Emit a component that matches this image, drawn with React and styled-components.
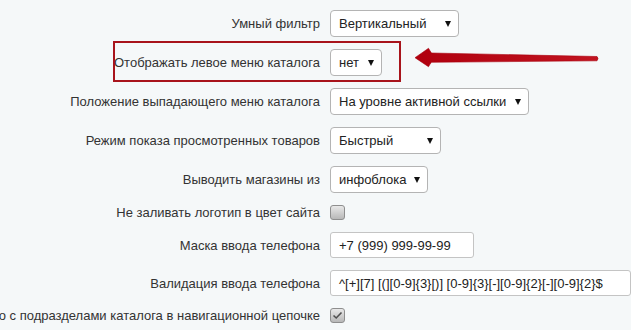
import styled, { createGlobalStyle } from 'styled-components';

const GlobalStyle = createGlobalStyle`
	html, body {
		margin: 0;
		padding: 0;
		background: #f5f8f9;
		overflow: hidden;
	}
	body {
		font-family: 'Liberation Sans', Arial, sans-serif;
		font-size: 13px;
		color: #333;
	}
`;

const rows = [
	{ label: 'Умный фильтр', type: 'select', value: 'Вертикальный', width: 129 },
	{ label: 'Отображать левое меню каталога', type: 'select', value: 'нет', width: 52, highlighted: true },
	{ label: 'Положение выпадающего меню каталога', type: 'select', value: 'На уровне активной ссылки', width: 199 },
	{ label: 'Режим показа просмотренных товаров', type: 'select', value: 'Быстрый', width: 111 },
	{ label: 'Выводить магазины из', type: 'select', value: 'инфоблока', width: 98 },
	{ label: 'Не заливать логотип в цвет сайта', type: 'checkbox', checked: false },
	{ label: 'Маска ввода телефона', type: 'input', value: '+7 (999) 999-99-99', width: 144 },
	{
		label: 'Валидация ввода телефона',
		type: 'input',
		value: '^[+][7] [(][0-9]{3}[)] [0-9]{3}[-][0-9]{2}[-][0-9]{2}$',
		width: 301,
	},
	{
		label: 'Показывать меню только с подразделами каталога в навигационной цепочке',
		type: 'checkbox',
		checked: true,
	},
];

const SForm = styled.div`
	display: flex;
	flex-direction: column;
	gap: 12px;
	padding-top: 10px;
`;

const SRow = styled.div`
	position: relative;
	display: flex;
	align-items: center;
	gap: 10px;
`;

const SLabel = styled.div`
	display: flex;
	justify-content: flex-end;
	flex-shrink: 0;
	width: 320px;
	line-height: 15px;
	white-space: nowrap;
	color: #333;
`;

const SSelect = styled.div`
	box-sizing: border-box;
	display: flex;
	align-items: center;
	justify-content: space-between;
	flex-shrink: 0;
	width: ${({ width }) => width}px;
	height: 27px;
	padding: 0 7px 0 8px;
	border: 1px solid #b4b4b4;
	border-radius: 4px;
	background: #fff;
	color: #222;
	white-space: nowrap;
`;

const SCaret = styled.span`
	width: 0;
	height: 0;
	margin-left: 8px;
	border-left: 3px solid transparent;
	border-right: 3px solid transparent;
	border-top: 6px solid #111;
`;

const SInput = styled.div`
	box-sizing: border-box;
	display: flex;
	align-items: center;
	flex-shrink: 0;
	width: ${({ width }) => width}px;
	height: 26px;
	padding: 0 8px;
	border: 1px solid #c4c4c4;
	border-radius: 3px;
	background: #fff;
	color: #222;
	white-space: nowrap;
	overflow: hidden;
`;

const SCheckbox = styled.span`
	box-sizing: border-box;
	display: flex;
	align-items: center;
	justify-content: center;
	flex-shrink: 0;
	width: 15px;
	height: 15px;
	border: 1px solid #8e8e8e;
	border-radius: 3px;
	background: linear-gradient(#e8e8e8, #b8b8b8);
`;

const SHighlight = styled.div`
	position: absolute;
	left: 113px;
	top: -8px;
	box-sizing: border-box;
	width: 288px;
	height: 41px;
	border: 2px solid #a8141c;
	pointer-events: none;
`;

const SArrow = styled.svg`
	position: absolute;
	left: 413px;
	top: -3px;
	overflow: visible;
`;

const Arrow = () => (
	<SArrow width="190" height="22" viewBox="0 0 190 22">
		<defs>
			<linearGradient id="arrowFill" x1="0" y1="0" x2="1" y2="0">
				<stop offset="0" stopColor="#b0000e" />
				<stop offset="1" stopColor="#c21420" />
			</linearGradient>
		</defs>
		<path
			d="M2 11.7 L15.5 2.3 Q17 5 18.5 7 L184 10.5 Q186 12.5 184 14.8 L18.5 16.3 Q17 18 15.5 20.7 Z"
			fill="url(#arrowFill)"
			stroke="#a8000e"
			strokeWidth="0.6"
			strokeLinejoin="round"
		/>
	</SArrow>
);

const Check = () => (
	<svg width="11" height="9" viewBox="0 0 11 9">
		<polyline
			points="1.5,4.5 4.2,7 9.5,1.5"
			fill="none"
			stroke="#4f4f4f"
			strokeWidth="1.6"
		/>
	</svg>
);

const Control = ({ row }) => {
	switch (row.type) {
		case 'select':
			return (
				<SSelect width={row.width}>
					<span>{row.value}</span>
					<SCaret />
				</SSelect>
			);
		case 'input':
			return <SInput width={row.width}>{row.value}</SInput>;
		default:
			return <SCheckbox>{row.checked && <Check />}</SCheckbox>;
	}
};

const App = () => (
	<>
		<GlobalStyle />
		<SForm>
			{rows.map((row) => (
				<SRow key={row.label}>
					<SLabel>
						<span>{row.label}</span>
					</SLabel>
					<Control row={row} />
					{row.highlighted && (
						<>
							<SHighlight />
							<Arrow />
						</>
					)}
				</SRow>
			))}
		</SForm>
	</>
);

export default App;
